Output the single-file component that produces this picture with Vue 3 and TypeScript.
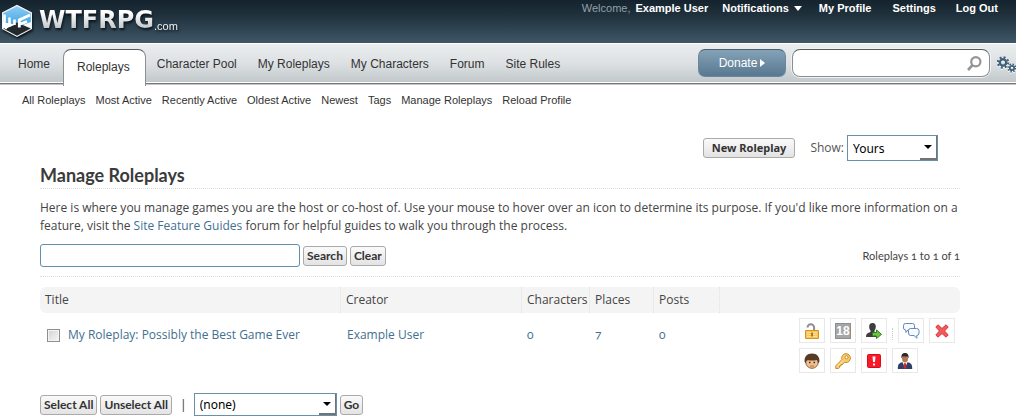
<script setup lang="ts">
import { ref } from 'vue'

interface NavItem { label: string; active?: boolean }

const navItems: NavItem[] = [
  { label: 'Home' },
  { label: 'Roleplays', active: true },
  { label: 'Character Pool' },
  { label: 'My Roleplays' },
  { label: 'My Characters' },
  { label: 'Forum' },
  { label: 'Site Rules' },
]
const subItems: string[] = [
  'All Roleplays', 'Most Active', 'Recently Active', 'Oldest Active',
  'Newest', 'Tags', 'Manage Roleplays', 'Reload Profile',
]
const columns: string[] = ['Title', 'Creator', 'Characters', 'Places', 'Posts']

const siteSearch = ref('')
const query = ref('')
const show = ref('Yours')
const bulkAction = ref('(none)')
const selected = ref(false)
</script>

<template>
  <div class="page">
    <header class="top">
      <a class="brand" href="#">
        <svg class="cube" width="32" height="34" viewBox="0 0 32 34" aria-hidden="true">
          <defs>
            <linearGradient id="cubeBlue" x1="0" y1="0" x2="0" y2="1">
              <stop offset="0" stop-color="#8ccdf5" />
              <stop offset="1" stop-color="#3f9fe0" />
            </linearGradient>
          </defs>
          <path d="M16 .8 31 8.500V25L16 33 1 25V8.500z" fill="#f4f6f7" />
          <path d="M16 2.200 29.800 9.300V18L16 23 2.200 18V9.300z" fill="url(#cubeBlue)" />
          <path d="M2.200 24.400 16 18.500 29.800 24.400 16 31.800z" fill="#22282c" />
          <path d="M3.500 10.500V22.500L6 24.500M8.500 13.500V22.500M13.500 15.500V21" fill="none" stroke="#fff" stroke-width="2.600" />
          <path d="M2.200 18.500 14.500 20.500 5 24.500 2.200 24z" fill="#fff" />
          <path d="M18.300 23.500V16L29 11M18.300 20.500 26 17.500" fill="none" stroke="#fff" stroke-width="2.800" />
        </svg>
        <span class="brand-name">WTFRPG</span>
        <span class="brand-tld">.com</span>
      </a>
      <nav class="account" aria-label="Account">
        <span class="welcome">Welcome,</span>
        <a class="user" href="#">Example User</a>
        <a class="notes" href="#">Notifications
          <svg width="8" height="5" viewBox="0 0 8 5" aria-hidden="true"><path d="M0 0h8L4 5z" fill="#fff" /></svg>
        </a>
        <a class="profile" href="#">My Profile</a>
        <a class="settings" href="#">Settings</a>
        <a href="#">Log Out</a>
      </nav>
    </header>

    <div class="bar">
      <nav class="tabs" aria-label="Main">
        <a v-for="item in navItems" :key="item.label" href="#" :class="['tab', { active: item.active }]">{{ item.label }}</a>
      </nav>
      <div class="tools">
        <button type="button" class="donate">Donate
          <svg width="5" height="8" viewBox="0 0 5 8" aria-hidden="true"><path d="M0 0v8l5-4z" fill="#fff" /></svg>
        </button>
        <div class="site-search">
          <input v-model="siteSearch" type="text" aria-label="Search site" />
          <button type="button" aria-label="Search site">
            <svg width="15" height="15" viewBox="0 0 15 15" fill="none" stroke="#959595" aria-hidden="true">
              <circle cx="8.800" cy="5.800" r="4.600" stroke-width="2.200" />
              <path d="M5.500 9.200 1 14" stroke-width="2.600" />
            </svg>
          </button>
        </div>
        <button type="button" class="gears" aria-label="Options">
          <svg width="19" height="18" viewBox="0 0 19 18" fill="none" stroke="#3f6078" aria-hidden="true">
            <circle cx="6" cy="6.500" r="3.200" stroke-width="2.400" />
            <circle cx="6" cy="6.500" r="5.200" stroke-width="2" stroke-dasharray="2 2.080" />
            <circle cx="15" cy="12" r="2.200" stroke-width="1.800" />
            <circle cx="15" cy="12" r="3.800" stroke-width="1.600" stroke-dasharray="1.500 1.480" />
          </svg>
        </button>
      </div>
    </div>

    <nav class="sub" aria-label="Roleplays">
      <a v-for="label in subItems" :key="label" href="#">{{ label }}</a>
    </nav>

    <main class="content">
      <div class="actions">
        <button type="button" class="btn wide">New Roleplay</button>
        <label for="show">Show:</label>
        <span class="select show">
          <select id="show" v-model="show"><option>Yours</option></select>
          <span class="drop"><svg width="8" height="4" viewBox="0 0 8 4" aria-hidden="true"><path d="M0 0h8L4 4z" /></svg></span>
        </span>
      </div>

      <h1>Manage Roleplays</h1>
      <p class="intro">Here is where you manage games you are the host or co-host of. Use your mouse to hover over an icon to determine its purpose. If you'd like more information on a feature, visit the <a href="#">Site Feature Guides</a> forum for helpful guides to walk you through the process.</p>

      <form class="filter" @submit.prevent>
        <input v-model="query" type="text" aria-label="Search roleplays" />
        <button type="submit" class="btn">Search</button>
        <button type="button" class="btn">Clear</button>
        <span class="count">Roleplays 1 to 1 of 1</span>
      </form>

      <table>
        <colgroup>
          <col class="c-title" /><col class="c-creator" /><col class="c-chars" /><col class="c-places" /><col class="c-posts" /><col />
        </colgroup>
        <thead>
          <tr><th v-for="c in columns" :key="c" scope="col">{{ c }}</th><td></td></tr>
        </thead>
        <tbody>
          <tr>
            <td>
              <span class="title-cell">
                <input v-model="selected" type="checkbox" aria-label="Select My Roleplay: Possibly the Best Game Ever" />
                <a href="#">My Roleplay: Possibly the Best Game Ever</a>
              </span>
            </td>
            <td><a href="#">Example User</a></td>
            <td class="num"><a href="#">0</a></td>
            <td class="num"><a href="#">7</a></td>
            <td class="num"><a href="#">0</a></td>
            <td class="icons-cell">
              <div class="icons">
                <button type="button" aria-label="Unlock">
                  <svg width="16" height="16" viewBox="0 0 16 16">
                    <path d="M3.500 4.500a3.300 3.300 0 0 1 6.600 0V8" fill="none" stroke="#8d8d8d" stroke-width="2" />
                    <path d="M1.500 7.500h13v8h-13z" fill="#f7c353" stroke="#d9951f" />
                    <path d="M3 9.500h10M3 11.500h10M3 13.500h10" stroke="#fbe19a" />
                    <path d="M7 9.500h2v4H7z" fill="#b9771a" />
                  </svg>
                </button>
                <button type="button" class="adult" aria-label="Adult content"><span>18</span></button>
                <button type="button" aria-label="Transfer">
                  <svg width="16" height="16" viewBox="0 0 16 16">
                    <path d="M6.500 0C9 0 10 1.700 9.800 4 9.600 6 9 7 8.500 7.500V9l3 1.500V14H0c0-2 .5-3.200 2-4l2.500-1V7.500C3.700 6.500 3.200 5.500 3.200 4 3 1.500 4.200 0 6.500 0z" fill="#3d3d3d" />
                    <path d="M6.500 9.500h4V7l5 4.300-5 4.200V13h-4z" fill="#6fc244" stroke="#2f7d1c" />
                  </svg>
                </button>
                <span class="dots"></span>
                <button type="button" aria-label="Messages">
                  <svg width="17" height="16" viewBox="0 0 17 16" fill="#f7fafe" stroke="#6288bd">
                    <path d="M2.500.5h7q2 0 2 2V5q0 2-2 2H5L3 9.500 2.800 7Q.5 7 .5 5V2.500q0-2 2-2z" />
                    <path d="M7.500 5.500h6q2.500 0 2.500 2V10q0 2.500-2.300 2.500l.3 2.800-3-2.800H7.500Q5.500 12.500 5.500 10V7.500q0-2 2-2z" />
                  </svg>
                </button>
                <button type="button" aria-label="Delete">
                  <svg width="14" height="14" viewBox="0 0 14 14">
                    <path d="M3 .8 7 4.500 11 .8 13.200 3 9.500 7l3.700 4L11 13.200 7 9.500 3 13.200.8 11l3.700-4L.8 3z" fill="#ef5a5a" stroke="#dc3039" />
                  </svg>
                </button>
              </div>
              <div class="icons">
                <button type="button" aria-label="Characters">
                  <svg width="16" height="16" viewBox="0 0 16 16">
                    <ellipse cx="8" cy="9" rx="6.300" ry="6.300" fill="#f0c290" stroke="#8b6038" />
                    <path d="M.6 9C.2 3.500 3 .5 8 .5s7.800 3 7.400 8.500L14 10l-.8-3C10 7.500 7 7.800 5 7.200L2.500 7.500 2 10z" fill="#573a28" />
                    <path d="M5 9.500h1.500M9.500 9.500H11" stroke="#3d2819" stroke-width="1.500" />
                    <path d="M6 13h4" stroke="#b96d50" />
                  </svg>
                </button>
                <button type="button" aria-label="Permissions">
                  <svg width="16" height="16" viewBox="0 0 16 16">
                    <path d="M11 .7a4.300 4.300 0 0 1 0 8.800l-1.500-.3-2 2.300H6v1.500H4.500v1.500L3.500 15.500H.8v-2.700L6.900 6.600C6 3.500 8 .7 11 .7z" fill="#f8ca69" stroke="#c98b2a" />
                    <circle cx="11.500" cy="4.300" r="1.500" fill="#fff" stroke="#c98b2a" />
                    <path d="M2 13.500 8 7.500" stroke="#fff0b5" />
                  </svg>
                </button>
                <button type="button" aria-label="Report">
                  <svg width="14" height="14" viewBox="0 0 14 14">
                    <rect x=".5" y=".5" width="13" height="13" rx="1" fill="#fa1929" stroke="#d80d1c" />
                    <path d="M5.500 2.500h3L8 8H6zM6 9.500h2v2H6z" fill="#fff" />
                  </svg>
                </button>
                <button type="button" aria-label="Hosts">
                  <svg width="16" height="16" viewBox="0 0 16 16">
                    <path d="M.8 16c0-4 .7-6 4.700-6.700h5c4 .7 4.700 2.700 4.700 6.700z" fill="#2e3f66" />
                    <path d="M5.500 9 8 15l2.500-6z" fill="#fff" />
                    <path d="M7.300 10h1.400l.8 4.500L8 16l-1.500-1.500z" fill="#d32430" />
                    <ellipse cx="8" cy="5.500" rx="3" ry="4" fill="#b77850" />
                    <path d="M4.500 5.500C4 1.500 5.500 0 8 0s4 1.500 3.500 5.500L10.500 3.500h-5z" fill="#2c2a2a" />
                  </svg>
                </button>
              </div>
            </td>
          </tr>
        </tbody>
      </table>

      <div class="bulk">
        <button type="button" class="btn">Select All</button>
        <button type="button" class="btn">Unselect All</button>
        <span class="pipe">|</span>
        <span class="select action">
          <select v-model="bulkAction" aria-label="Action for selected roleplays"><option>(none)</option></select>
          <span class="drop"><svg width="8" height="4" viewBox="0 0 8 4" aria-hidden="true"><path d="M0 0h8L4 4z" /></svg></span>
        </span>
        <button type="button" class="btn">Go</button>
      </div>
    </main>
  </div>
</template>

<style>
body { margin: 0; background: #fff; overflow: hidden; }
</style>

<style scoped>
* { box-sizing: border-box; }
.page { font: 12px/18px "Liberation Sans", Arial, sans-serif; color: #333; }
a { text-decoration: none; color: #42708f; }
button { cursor: pointer; }
svg { display: block; flex: none; }

.top {
  display: flex; justify-content: space-between; align-items: flex-start;
  height: 43px; padding-right: 18px;
  background: linear-gradient(#14232d, #21333f 40%, #3f5767);
}
.brand { display: flex; padding: 4px 0 0 1px; filter: drop-shadow(1px 2px 1px #0c161d); }
.brand-name {
  margin-left: 6px; font: bold 24px/33px "DejaVu Sans", sans-serif;
  color: transparent; background: linear-gradient(#fff 25%, #b9bdc0 80%);
  background-clip: text; -webkit-background-clip: text;
}
.brand-tld { padding-top: 13px; font-size: 11px; line-height: 18px; color: #eef1f3; }
.account { display: flex; font-size: 11px; line-height: 16px; }
.account a { color: #fff; font-weight: bold; }
.welcome { color: #93a0a9; margin-right: 5px; }
.user { margin-right: 14px; }
.notes { display: flex; align-items: center; gap: 5px; margin-right: 17px; }
.profile { margin-right: 21px; }
.settings { margin-right: 20px; }

.bar {
  display: flex; justify-content: space-between; height: 42px;
  border-top: 1px solid #fff; border-bottom: 1px solid #c6c2c6;
  background: linear-gradient(#ebeeef, #dce0e2 50%, #bfc5c8);
  box-shadow: inset 0 -1px #77777b, inset 0 -2px #fff;
}
.tabs { display: flex; align-items: flex-start; padding-left: 4px; white-space: nowrap; }
.tab { color: #333; padding: 11px 10px 0 14px; }
.tab.active {
  height: 37px; margin: 5px 0 -1px 3px; padding: 8px 15px 0 13px; background: #fff;
  border: 1px solid #8b9093; border-top-color: #55595c; border-bottom: 0;
  border-radius: 8px 8px 0 0;
}
.tab:nth-child(n+3) { padding: 11px 10px 0 11px; }
.tools { display: flex; padding-top: 5px; }
.donate {
  display: flex; align-items: center; justify-content: center; gap: 3px;
  width: 88px; height: 28px; margin-right: 6px; padding: 0; border: 1px solid #6d8799;
  border-top-color: #4d5f6c; border-radius: 7px; color: #fff;
  font: 12px "Liberation Sans", Arial, sans-serif;
  background: linear-gradient(#84a2b7, #587891);
}
.site-search {
  display: flex; align-items: center; width: 198px; height: 28px; padding: 0 7px;
  border: 1px solid #8a8e91; border-top-color: #55595c; border-radius: 8px;
  background: #fff; box-shadow: 0 0 0 1px #f1f3f4;
}
.site-search input { flex: 1; min-width: 0; border: 0; outline: 0; background: none; }
.site-search button { padding: 0; border: 0; background: none; }
.gears { margin-left: 7px; padding: 4px 0 0; width: 19px; height: 28px; border: 0; background: none; }
.gears svg { filter: drop-shadow(0 1px #fff); }

.sub { display: flex; gap: 10px; padding: 7px 22px 0; font-size: 11px; line-height: 16px; }
.sub a { color: #333; white-space: nowrap; }

.content { margin: 0 56px 0 40px; font: 12px/18px "Open Sans", Candara, sans-serif; }
.actions { display: flex; align-items: center; justify-content: flex-end; margin: 27px 22px 0 0; color: #555; }
.btn {
  height: 20px; padding: 0 3px; border: 1px solid #aaa; border-radius: 3px;
  color: #333; background: linear-gradient(#fafafa, #e3e3e3);
  font: bold 12px/16px Lato, "Open Sans", sans-serif; white-space: nowrap;
}
.btn.wide { padding: 0 8px; margin-right: 15px; font: bold 11px/16px "Noto Sans", sans-serif; }
.select { position: relative; display: block; }
.select select {
  appearance: none; display: block; width: 100%; height: 100%; padding: 0 20px 0 5px;
  border: 1px solid #6990ab; border-radius: 0; background: #fff; color: #000;
  font: 12px "Noto Sans", "Open Sans", sans-serif;
}
.drop {
  position: absolute; inset: 1px 1px 1px auto; width: 17px; display: grid; place-items: center;
  border: solid #737373; border-width: 0 1px 2px 0; pointer-events: none;
}
.show { width: 91px; height: 26px; margin-left: 3px; }
.action { width: 143px; height: 23px; }

h1 {
  margin: 2px 0 0; padding-bottom: 1px; border-bottom: 1px dotted #ddd;
  font: bold 18px/24px Lato, Candara, sans-serif; color: #3b3b3b;
}
.intro { margin: 10px 0 0; color: #444; }
.filter {
  display: flex; align-items: center; gap: 3px; margin-top: 9px; padding-bottom: 9px;
  border-bottom: 1px dotted #ddd;
}
.filter input { width: 260px; height: 23px; border: 1px solid #5f8fb2; border-radius: 3px; background: #fff; }
.count { margin-left: auto; color: #444; font: 11px/18px Lato, sans-serif; font-variant-numeric: oldstyle-nums; }

table { width: 100%; margin-top: 10px; border-collapse: separate; border-spacing: 0; table-layout: fixed; }
.c-title { width: 301px; }
.c-creator { width: 181px; }
.c-chars { width: 68px; }
.c-places { width: 64px; }
.c-posts { width: 66px; }
thead th, thead td { height: 26px; padding: 0 5px; text-align: left; font-weight: normal; background: #f4f4f4; }
thead th { border-right: 1px dotted #e2e2e2; color: #444; }
thead th:first-child { border-radius: 6px 0 0 6px; }
thead td { border-radius: 0 6px 6px 0; }
tbody td { padding: 13px 6px 0; vertical-align: top; }
tbody .num { padding: 13px 5px 0; font: 12px/18px Lato, sans-serif; font-variant-numeric: oldstyle-nums; }
.title-cell { display: flex; align-items: center; gap: 8px; white-space: nowrap; }
.title-cell input {
  appearance: none; width: 13px; height: 13px; margin: 0 0 0 1px; border: 1px solid #8e8f8f;
  background: linear-gradient(135deg, #cfd2d5, #f7f7f7); box-shadow: inset 0 0 0 1px #f4f4f4;
}
tbody .icons-cell { padding: 5px 0 0 79px; }
.icons { display: flex; gap: 5px; margin-bottom: 5px; }
.icons button {
  display: grid; place-items: center; width: 26px; height: 25px; padding: 0;
  border: 1px solid #e8e8e8; background: #fff;
}
.adult span {
  width: 16px; height: 16px; background: #a6a6a6; color: #fff; box-shadow: inset 0 0 0 1px #8e8e8e;
  font: bold 12px/16px "Liberation Sans", Arial, sans-serif; text-align: center;
}
.dots { width: 1px; height: 12px; margin: 10px 0 0; border-left: 1px dotted #ccc; }

.bulk { display: flex; align-items: center; gap: 3px; margin-top: 15px; }
.pipe { margin: 0 4px 0 5px; }
</style>
